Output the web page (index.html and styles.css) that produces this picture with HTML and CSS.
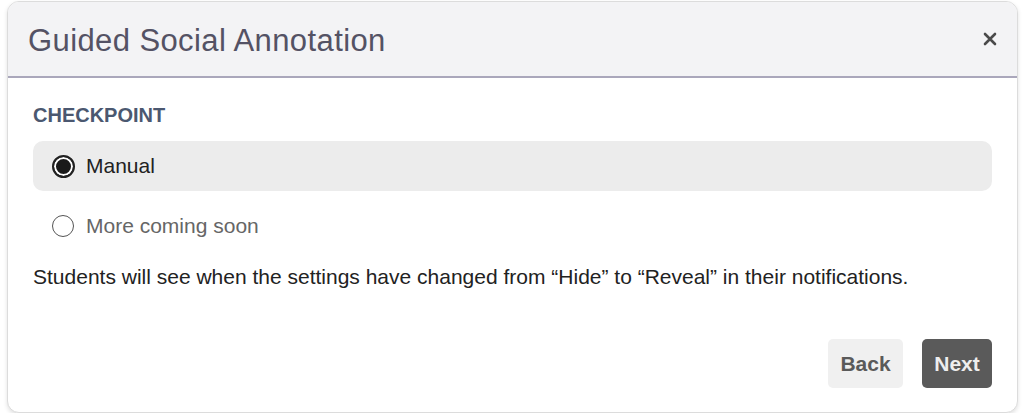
FILE: index.html
```html
<!DOCTYPE html>
<html lang="en">
<head>
    <meta charset="UTF-8">
    <title>Guided Social Annotation</title>
    <link rel="stylesheet" href="styles.css">
</head>
<body>
<div class="modal">
    <div class="modal-header">
        <h1>Guided Social Annotation</h1>
        <button type="button" class="close" aria-label="Close">
            <svg width="14" height="14" viewBox="0 0 14 14">
                <path d="M2 2 L12 12 M12 2 L2 12" stroke="#4a4a4a" stroke-width="2.6" stroke-linecap="round"/>
            </svg>
        </button>
    </div>
    <div class="modal-body">
        <h2>CHECKPOINT</h2>
        <label class="option selected">
            <span class="radio checked"></span>
            Manual
        </label>
        <label class="option muted">
            <span class="radio"></span>
            More coming soon
        </label>
        <p class="note">Students will see when the settings have changed from &ldquo;Hide&rdquo; to &ldquo;Reveal&rdquo; in their notifications.</p>
    </div>
    <div class="modal-footer">
        <button type="button" class="btn btn-back">Back</button>
        <button type="button" class="btn btn-next">Next</button>
    </div>
</div>
</body>
</html>
```

FILE: styles.css
```css
body {
    font-family: 'Liberation Sans', Arial, sans-serif;
    margin: 0;
    padding: 0;
    background-color: #fff;
}

.modal {
    margin: 1px 6px 0 7px;
    width: 1009px;
    height: 410px;
    border: 1px solid #dcdcdc;
    border-radius: 12px;
    box-shadow: 0 2px 4px rgba(0, 0, 0, 0.12);
    display: flex;
    flex-direction: column;
    overflow: hidden;
    background-color: #fff;
}

.modal-header {
    height: 74px;
    background-color: #f3f3f5;
    border-bottom: 2px solid #aaa7bb;
    display: flex;
    align-items: center;
    justify-content: space-between;
    padding: 0 20px 0 20px;
}

.modal-header h1 {
    margin: 0;
    font-size: 31px;
    letter-spacing: 0.4px;
    font-weight: normal;
    color: #545264;
    padding-top: 4px;
}

.close {
    background: none;
    border: none;
    padding: 0;
    display: flex;
    cursor: pointer;
}

.modal-body {
    padding: 26px 25px 0 25px;
}

.modal-body h2 {
    margin: 0 0 14px 0;
    font-size: 20px;
    line-height: 23px;
    font-weight: bold;
    color: #4b5870;
}

.option {
    display: flex;
    align-items: center;
    height: 50px;
    padding-left: 19px;
    font-size: 21px;
    color: #222;
    border-radius: 10px;
    margin-bottom: 10px;
}

.option.selected {
    background-color: #ececec;
}

.option.muted {
    color: #666;
}

.radio {
    width: 22px;
    height: 22px;
    border: 1.5px solid #555;
    border-radius: 50%;
    margin-right: 12px;
    box-sizing: border-box;
    background-color: #fff;
}

.radio.checked {
    width: 23px;
    height: 23px;
    border: 2px solid #222;
    background-color: #1a1a1a;
    box-shadow: inset 0 0 0 2px #fff;
    margin-right: 11px;
}

.note {
    margin: 14px 0 0 0;
    font-size: 21px;
    line-height: 24px;
    color: #222;
}

.modal-footer {
    margin-top: auto;
    display: flex;
    justify-content: flex-end;
    gap: 19px;
    padding: 0 25px 24px 0;
}

.btn {
    font-family: 'Liberation Sans', Arial, sans-serif;
    font-size: 21px;
    font-weight: bold;
    border: none;
    border-radius: 5px;
    height: 49px;
    padding: 0;
    cursor: pointer;
}

.btn-back {
    width: 75px;
    background-color: #f0f0f0;
    color: #5a5a5a;
}

.btn-next {
    width: 70px;
    background-color: #5a5a5a;
    color: #eee;
}
```
